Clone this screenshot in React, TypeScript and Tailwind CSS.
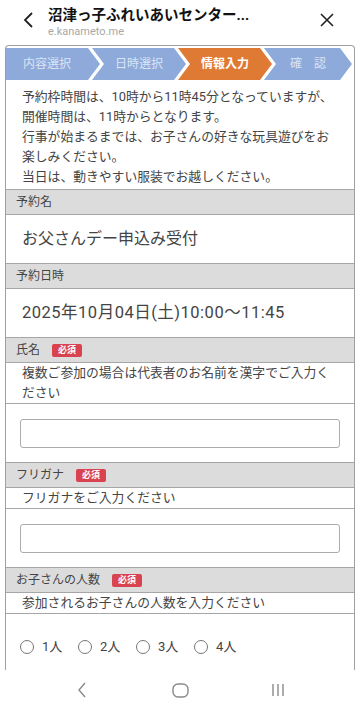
import React from "react";

const steps = [
  { label: ["内容選択"], active: false, first: true },
  { label: ["日時選択"], active: false, first: false },
  { label: ["情報入力"], active: true, first: false },
  { label: ["確", "認"], active: false, first: false },
];

function Required() {
  return (
    <span className="ml-3 inline-flex h-[13px] items-center rounded-[2px] bg-[#d8434f] px-[6px] text-[9px] font-bold leading-none text-white">
      必須
    </span>
  );
}

function SectionHead({ label, required }: { label: string; required?: boolean }) {
  return (
    <div className="flex h-[25px] items-center border-b border-[#a6a6a6] bg-[#dcdcdc] px-[10px] text-[12px] text-[#444]">
      {label}
      {required && <Required />}
    </div>
  );
}

function TextInput() {
  return (
    <div className="h-[59px] border-b border-[#a6a6a6] px-[14px] pt-[15px]">
      <div className="h-[29px] rounded-[3px] border-[1.5px] border-[#ababab] bg-white" />
    </div>
  );
}

export default function App() {
  return (
    <div className="flex h-[710px] w-[360px] flex-col overflow-hidden bg-white font-['Roboto','Noto_Sans_CJK_JP',sans-serif] text-[#444]">
      {/* browser header */}
      <div className="flex h-[45px] shrink-0 items-start">
        <div className="flex w-[48px] justify-center pt-[12px] pl-[8px]">
          <svg width="11" height="16" viewBox="0 0 11 16" fill="none">
            <path d="M9 1 L2 8 L9 15" stroke="#222" strokeWidth="1.8" />
          </svg>
        </div>
        <div className="flex-1 pt-[6px]">
          <div className="text-[14.5px] font-bold leading-[19px] text-[#111]">
            沼津っ子ふれいあいセンター...
          </div>
          <div className="text-[11px] leading-[14px] text-[#a8a8a8]">e.kanameto.me</div>
        </div>
        <div className="pt-[13px] pr-[26px]">
          <svg width="14" height="14" viewBox="0 0 14 14" fill="none">
            <path d="M1 1 L13 13 M13 1 L1 13" stroke="#222" strokeWidth="1.6" />
          </svg>
        </div>
      </div>

      {/* form card */}
      <div className="mx-[5px] flex-1 overflow-hidden rounded-t-[4px] border-x border-t border-[#a0a0a0]">
        <div className="flex pt-[2px] pb-[1px]">
          {steps.map((s, i) => (
            <div
              key={i}
              className={`flex h-[32px] items-center justify-center gap-[12px] text-[12px] ${
                i === 3 ? "w-[88px]" : "w-[94px]"
              } ${i > 0 ? "-ml-[8px] pl-[12px]" : ""} pr-[12px] ${
                s.active ? "bg-[#df7a35] font-bold text-white" : "bg-[#8eaadb] text-[#dbe4f3]"
              } ${
                s.first
                  ? "[clip-path:polygon(0_0,calc(100%_-_12px)_0,100%_50%,calc(100%_-_12px)_100%,0_100%)]"
                  : "[clip-path:polygon(0_0,calc(100%_-_12px)_0,100%_50%,calc(100%_-_12px)_100%,0_100%,12px_50%)]"
              }`}
            >
              {s.label.map((t) => (
                <span key={t}>{t}</span>
              ))}
            </div>
          ))}
        </div>

        <div className="border-b border-[#a6a6a6] px-[16px] pt-[6px] pb-[2px] text-[12.8px] leading-[20px] whitespace-nowrap">
          予約枠時間は、10時から11時45分となっていますが、
          <br />
          開催時間は、11時からとなります。
          <br />
          行事が始まるまでは、お子さんの好きな玩具遊びをお
          <br />
          楽しみください。
          <br />
          当日は、動きやすい服装でお越しください。
        </div>

        <SectionHead label="予約名" />
        <div className="flex h-[49px] items-center border-b border-[#a6a6a6] px-[16px] text-[16px]">
          お父さんデー申込み受付
        </div>

        <SectionHead label="予約日時" />
        <div className="flex h-[49px] items-center border-b border-[#a6a6a6] px-[16px] text-[16.5px] tracking-[0.5px]">
          2025年10月04日(土)10:00〜11:45
        </div>

        <SectionHead label="氏名" required />
        <div className="border-b border-[#a6a6a6] px-[16px] text-[12.8px] leading-[20px]">
          複数ご参加の場合は代表者のお名前を漢字でご入力く
          <br />
          ださい
        </div>
        <TextInput />

        <SectionHead label="フリガナ" required />
        <div className="border-b border-[#a6a6a6] px-[16px] text-[12.8px] leading-[20px]">
          フリガナをご入力ください
        </div>
        <TextInput />

        <SectionHead label="お子さんの人数" required />
        <div className="border-b border-[#a6a6a6] px-[16px] text-[12.8px] leading-[20px]">
          参加されるお子さんの人数を入力ください
        </div>
        <div className="flex px-[14px] pt-[23px]">
          {["1人", "2人", "3人", "4人"].map((n) => (
            <label key={n} className="flex w-[58px] items-center gap-[8px] text-[13px]">
              <span className="h-[14px] w-[14px] rounded-full border border-[#777] bg-white" />
              {n}
            </label>
          ))}
        </div>
      </div>

      {/* android nav bar */}
      <div className="flex h-[40px] shrink-0 items-center justify-center bg-white">
        <div className="flex w-[98px] justify-center">
          <svg width="10" height="16" viewBox="0 0 10 16" fill="none">
            <path d="M8 1 L2 8 L8 15" stroke="#8a8a8a" strokeWidth="1.4" />
          </svg>
        </div>
        <div className="flex w-[98px] justify-center">
          <svg width="17" height="15" viewBox="0 0 17 15" fill="none">
            <rect x="1" y="1" width="15" height="13" rx="5" stroke="#8a8a8a" strokeWidth="1.4" />
          </svg>
        </div>
        <div className="flex w-[98px] justify-center">
          <svg width="14" height="14" viewBox="0 0 14 14" fill="none">
            <path d="M2 1 V13 M7 1 V13 M12 1 V13" stroke="#8a8a8a" strokeWidth="1.4" />
          </svg>
        </div>
      </div>
    </div>
  );
}
